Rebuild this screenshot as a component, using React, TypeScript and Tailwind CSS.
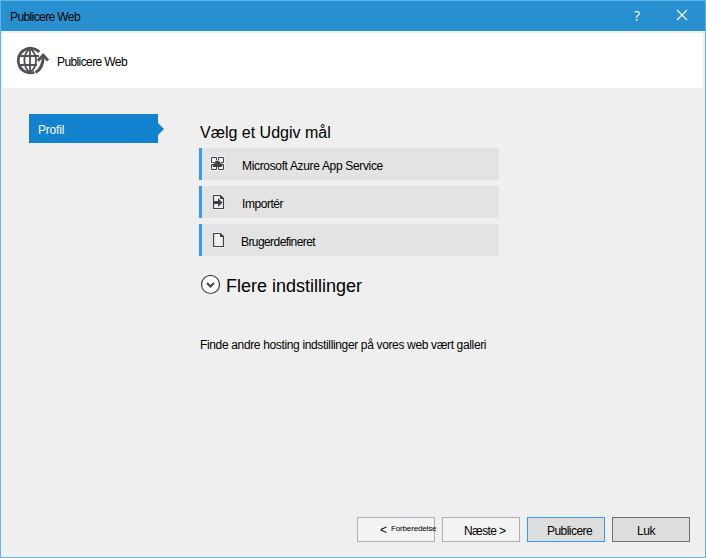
import type { ReactNode } from "react";

function GlobeIcon() {
  return (
    <svg width="34" height="32" viewBox="0 0 34 32" fill="none" stroke="#505256">
      <path d="M24.300 7A12.300 12.300 0 1 0 19.500 27.200" strokeWidth="2.800" />
      <path d="M15 3.500C7.500 9 7.500 22 15 27.500M15 3.500C18.500 6 21 10 21 15.500S19 24.500 15 27.500" strokeWidth="1.800" />
      <path d="M15 3.500v24M4 11h20M4 20h18" strokeWidth="1.800" />
      <path d="M20 28C26 25 28.300 19 28.200 12" stroke="white" strokeWidth="4.500" />
      <path d="M20.500 27.500C26 24.500 28.300 18.500 28.200 10.500" strokeWidth="3" />
      <path d="M22.800 15.800L28.200 10L33 15.500" strokeWidth="2.800" />
    </svg>
  );
}

function AzureIcon() {
  return (
    <svg className="ml-2" width="15" height="15" viewBox="0 0 15 15">
      <path d="M0 0h15v15H0z" fill="#f0eff1" />
      <path d="M6.500 4V1.500h-5v5H4M4 8.500H1.500v5h5V11M8.500 4V1.500h5v5H11M11 8.500h2.500v5h-5V11" fill="none" stroke="#424242" />
      <path d="M4 11C2 11 2.300 8 4.300 7.700C4.500 3.700 9.800 3.300 10.300 7C13 7 13 11 11 11z" fill="#424242" />
    </svg>
  );
}

function PageIcon({ arrow = false }: { arrow?: boolean }) {
  return (
    <svg className="ml-2.5" width="13" height="16" viewBox="0 0 13 16">
      <path d="M0 0h9l4 4v12H0z" fill="#f0eff1" />
      <path d="M1.500 1.500h7l3 3v10h-10z" fill="none" stroke="#424242" strokeWidth="1.200" />
      <path d="M8 1v4h4z" fill="#424242" />
      {arrow && <path d="M1 7h5V4l4.500 4.500L6 13v-3H1z" fill="#424242" />}
    </svg>
  );
}

function Target({ icon, children }: { icon: ReactNode; children: ReactNode }) {
  return (
    <div className="flex h-8 w-[300px] border-l-[3px] border-[#3399ff] bg-[#e3e3e3]">
      <div className="flex w-[31px] items-start pt-2">{icon}</div>
      <div className="pl-2 leading-[36px]">{children}</div>
    </div>
  );
}

export default function App() {
  return (
    <div className="flex h-[558px] w-[706px] flex-col border border-[#5bb8ee] bg-[#efefef] font-['Liberation_Sans',Arial,sans-serif] text-xs whitespace-nowrap text-black">
      <header className="flex h-[30px] shrink-0 items-center bg-[#2990cf] pl-[9px]">
        <span className="pt-0.5 tracking-[-0.6px]">Publicere Web</span>
        <span className="ml-auto w-10 text-center font-['Open_Sans',sans-serif] text-sm text-white">?</span>
        <svg className="-mt-0.5 mr-[17px] ml-[19px]" width="12" height="12" viewBox="0 0 12 12" stroke="white" strokeWidth="1.200">
          <path d="M1 1l10 10M11 1L1 11" />
        </svg>
      </header>
      <section className="mx-0.5 mt-0.5 flex h-[55px] shrink-0 items-center bg-white pl-3">
        <GlobeIcon />
        <span className="pt-0.5 pl-2 tracking-[-0.6px]">Publicere Web</span>
      </section>
      <main className="flex flex-1 pl-7">
        <nav className="mt-[26px] flex h-[29px] w-[170px] items-center">
          <div className="h-[29px] w-[129px] bg-[#1382ce] pl-[9px] leading-[32px] tracking-[-0.2px] text-white">Profil</div>
          <svg width="6" height="12" viewBox="0 0 6 12" fill="#1382ce">
            <path d="M0 0l6 6l-6 6z" />
          </svg>
        </nav>
        <div className="pt-[34px]">
          <h1 className="mb-1 pl-px text-base leading-[22px]">Vælg et Udgiv mål</h1>
          <div className="flex flex-col gap-1.5">
            <Target icon={<AzureIcon />}>
              <span className="pl-px tracking-[-0.34px]">Microsoft Azure App Service</span>
            </Target>
            <Target icon={<PageIcon arrow />}>
              <span className="pl-px tracking-[-0.45px]">Importér</span>
            </Target>
            <Target icon={<PageIcon />}>
              <span className="tracking-[-0.58px]">Brugerdefineret</span>
            </Target>
          </div>
          <div className="mt-[17px] flex h-6 items-center pl-px">
            <svg width="20" height="20" viewBox="0 0 20 20" fill="white" stroke="#424242">
              <circle cx="10.500" cy="9.500" r="9" strokeWidth="1.200" />
              <path d="M7 8l3.500 3.500l3.500-3.500" fill="none" strokeWidth="2" />
            </svg>
            <h2 className="pt-0.5 pl-1.5 text-lg leading-6">Flere indstillinger</h2>
          </div>
          <p className="mt-10 pl-px leading-4 tracking-[-0.35px]">Finde andre hosting indstillinger på vores web vært galleri</p>
        </div>
      </main>
      <footer className="mr-[15px] mb-[15px] flex shrink-0 justify-end gap-[7px] leading-[26px]">
        <button className="flex h-[25px] w-[78px] border border-[#adb2b5] bg-[#f3f3f3] pl-[22px]">
          <span className="leading-[25px]">&lt;</span>
          <span className="pl-1 text-[8px] leading-[21px] tracking-[-0.15px]">Forberedelse</span>
        </button>
        <button className="h-[25px] w-[78px] border border-[#adb2b5] bg-[#f3f3f3] pl-[21px] text-left tracking-[-0.6px]">Næste &gt;</button>
        <button className="h-[25px] w-[78px] border border-[#3399ff] bg-[#dddddd] pl-[19px] text-left tracking-[-0.55px]">Publicere</button>
        <button className="h-[25px] w-[78px] border border-[#707070] bg-[#dddddd] pl-6 text-left tracking-[-0.4px]">Luk</button>
      </footer>
    </div>
  );
}
